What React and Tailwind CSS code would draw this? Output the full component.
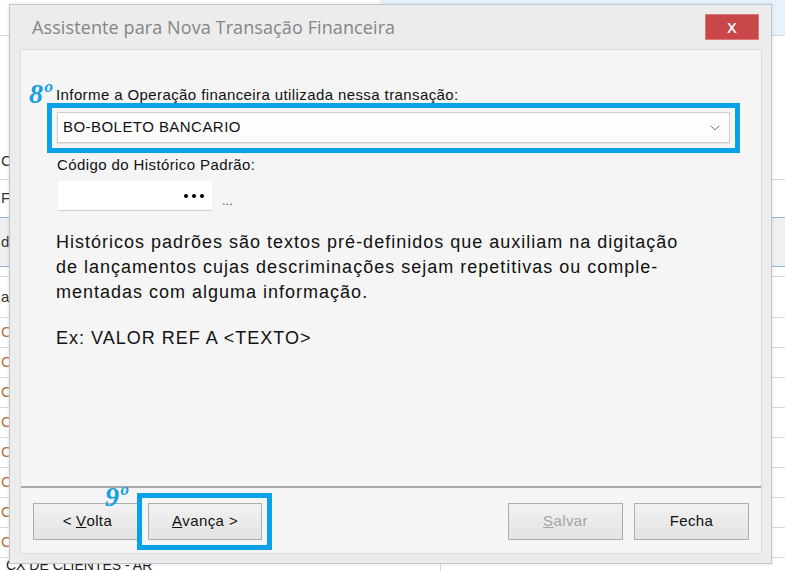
import { ChevronDown } from 'lucide-react';

const sans = { fontFamily: '"Liberation Sans", Arial, sans-serif' };
const mark = { fontFamily: '"Liberation Serif", serif' };

function BgRow({ h, children, line = 'border-[#d9d9d9]', bg = 'bg-white' }) {
  return (
    <div className={`${h} ${bg} ${line} border-b flex items-center pl-[1px] text-[15px] text-[#333]`}>
      {children}
    </div>
  );
}

function Button({ children, className = '' }) {
  return (
    <button
      className={`h-[37px] border border-[#adadad] bg-gradient-to-b from-[#f2f2f2] to-[#e3e3e3] text-[15px] tracking-[0.4px] text-[#111] flex items-center justify-center ${className}`}
    >
      {children}
    </button>
  );
}

export default function App() {
  return (
    <div className="relative w-[785px] h-[571px] overflow-hidden bg-white" style={sans}>
      {/* TELA DE FUNDO */}
      <div className="flex flex-col">
        <div className="h-[36px] flex border-b border-[#d5d5d5]">
          <div className="w-[380px] bg-white" />
          <div className="flex-1 bg-[#e6f3fc]" />
        </div>
        <div className="h-[107px] bg-white" />
        <BgRow h="h-[37px]">Cx</BgRow>
        <BgRow h="h-[38px]" line="border-[#8ab8e0]">Fx</BgRow>
        <BgRow h="h-[49px]" line="border-[#8ab8e0]" bg="bg-[#f0f0f0]">de</BgRow>
        <BgRow h="h-[10px]"> </BgRow>
        <BgRow h="h-[41px]">a</BgRow>
        {[0, 1, 2, 3, 4, 5, 6, 7].map((i) => (
          <BgRow key={i} h="h-[30px]">
            <span className="text-[#b0703a]">C</span>
          </BgRow>
        ))}
        <div className="h-[20px] flex">
          <div className="w-[441px] border-r border-[#d9d9d9] pl-[6px] text-[14px] leading-[14px] text-[#222]">
            CX DE CLIENTES - AR
          </div>
        </div>
      </div>

      {/* JANELA DO ASSISTENTE */}
      <div className="absolute left-[9px] top-[4px] w-[763px] h-[560px] bg-[#ececec] border border-[#c4c4c4] shadow-[0_0_4px_rgba(0,0,0,0.12)] flex flex-col">
        <div className="h-[44px] flex items-center justify-between pl-[22px] pr-[12px] shrink-0">
          <span className="text-[18px] tracking-[0.1px] text-[#858585]" style={{ fontFamily: '"Open Sans", "Noto Sans", sans-serif' }}>
            Assistente para Nova Transação Financeira
          </span>
          <div className="w-[54px] h-[26px] bg-[#c94749] border border-[#d87a7b] flex items-center justify-center text-white text-[15px] font-semibold" style={{ fontFamily: '"Open Sans", sans-serif' }}>
            X
          </div>
        </div>

        <div className="ml-[10px] mr-[9px] h-[505px] border border-[#dadada] bg-[#f5f5f5] flex flex-col relative">
          <div className="flex-1 flex flex-col">
            {/* 8º */}
            <div className="flex items-end h-[22px] mt-[31px] pl-[8px]">
              <span className="w-[27px] text-[28px] leading-[22px] font-bold italic text-[#14a0e2] -mb-[2px]" style={mark}>
                8º
              </span>
              <span className="text-[15px] leading-[17px] tracking-[0.4px] text-[#111]">
                Informe a Operação financeira utilizada nessa transação:
              </span>
            </div>

            <div className="ml-[26px] w-[693px] h-[50px] border-[5px] border-[#0aa2e6] px-[5px] pt-[4px]">
              <div className="h-[31px] bg-[#fdfdfd] border border-[#cfcfcf] shadow-[0_1px_1px_rgba(0,0,0,0.08)] flex items-center justify-between pl-[5px] pr-[6px]">
                <span className="text-[15px] tracking-[0.45px] text-[#111]">BO-BOLETO BANCARIO</span>
                <ChevronDown className="w-[16px] h-[16px] text-[#777]" strokeWidth={1.5} />
              </div>
            </div>

            <div className="ml-[36px] mt-[3px] text-[15px] leading-[17px] tracking-[0.4px] text-[#111]">
              Código do Histórico Padrão:
            </div>

            <div className="ml-[37px] mt-[8px] flex items-end">
              <div className="w-[154px] h-[30px] bg-white border-b border-[#d0d0d0] flex items-center justify-end gap-[4px] pr-[8px]">
                <span className="w-[4px] h-[4px] rounded-full bg-black" />
                <span className="w-[4px] h-[4px] rounded-full bg-black" />
                <span className="w-[4px] h-[4px] rounded-full bg-black" />
              </div>
              <span className="ml-[10px] text-[13px] leading-[14px] text-[#555] mb-[3px]">...</span>
            </div>

            <div className="ml-[35px] mt-[19px] text-[18px] leading-[25px] tracking-[1px] text-[#111]">
              <p>Históricos padrões são textos pré-definidos que auxiliam na digitação</p>
              <p>de lançamentos cujas descriminações sejam repetitivas ou comple-</p>
              <p>mentadas com alguma informação.</p>
              <p className="mt-[21px]">Ex: VALOR REF A &lt;TEXTO&gt;</p>
            </div>
          </div>

          {/* RODAPÉ */}
          <div className="h-[67px] border-t-2 border-[#a9a9a9] flex items-start pt-[15px] pl-[12px] pr-[12px] shrink-0">
            <Button className="w-[109px]">
              &lt; <span className="underline ml-[4px]">V</span>olta
            </Button>
            <div className="ml-[-5px] -mt-[10px] w-[135px] h-[57px] border-[5px] border-[#0aa2e6] pl-[6px] pt-[5px]">
              <Button className="w-[114px] border-[#6fb3ea]">
                <span className="underline">A</span>vança &gt;
              </Button>
            </div>
            <div className="flex-1" />
            <Button className="w-[115px] text-[#a3a3a3]">
              <span className="underline">S</span>alvar
            </Button>
            <Button className="w-[115px] ml-[11px]">Fecha</Button>
          </div>

          {/* 9º */}
          <span className="absolute left-[84px] top-[436px] text-[28px] leading-[22px] font-bold italic text-[#14a0e2]" style={mark}>
            9º
          </span>
        </div>
      </div>
    </div>
  );
}
